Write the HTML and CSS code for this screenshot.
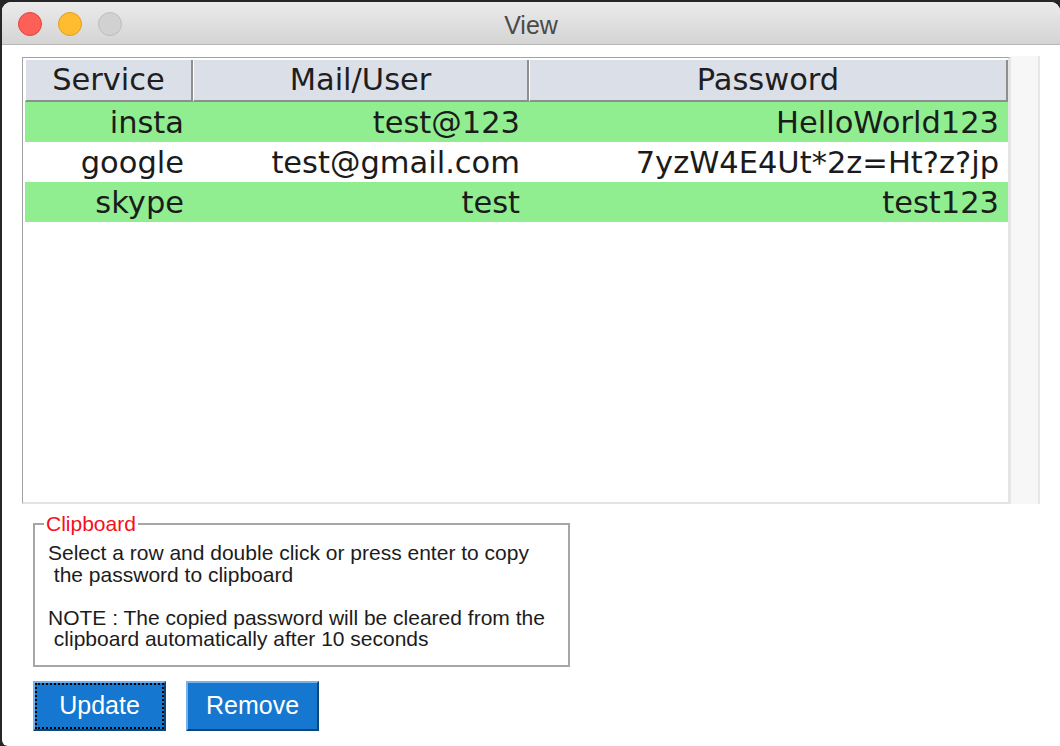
FILE: index.html
```html
<!DOCTYPE html>
<html>
<head>
<meta charset="utf-8">
<title>View</title>
<link rel="stylesheet" href="styles.css">
</head>
<body>
<div class="window">
  <div class="titlebar">
    <div class="lights">
      <span class="light red"></span>
      <span class="light yellow"></span>
      <span class="light gray"></span>
    </div>
    <div class="title">View</div>
    <div></div>
  </div>
  <div class="content">
    <div class="table-area">
      <div class="pane">
        <div class="row head">
          <div class="th">Service</div>
          <div class="th">Mail/User</div>
          <div class="th">Password</div>
        </div>
        <div class="row hl">
          <div class="td">insta</div>
          <div class="td">test@123</div>
          <div class="td">HelloWorld123</div>
        </div>
        <div class="row">
          <div class="td">google</div>
          <div class="td">test@gmail.com</div>
          <div class="td">7yzW4E4Ut*2z=Ht?z?jp</div>
        </div>
        <div class="row hl">
          <div class="td">skype</div>
          <div class="td">test</div>
          <div class="td">test123</div>
        </div>
      </div>
      <div class="scrollbar"></div>
    </div>
    <fieldset class="clip">
      <legend>Clipboard</legend>
      <p class="note">Select a row and double click or press enter to copy
 the password to clipboard

NOTE : The copied password will be cleared from the
 clipboard automatically after 10 seconds</p>
    </fieldset>
    <div class="btns">
      <button class="btn focus">Update</button>
      <button class="btn">Remove</button>
    </div>
  </div>
</div>
</body>
</html>
```

FILE: styles.css
```css
html, body {
  margin: 0;
  padding: 0;
}
body {
  width: 1060px;
  height: 746px;
  overflow: hidden;
  background: #262626;
  font-family: "Liberation Sans", Arial, sans-serif;
}
.window {
  margin: 2px 0 0 2px;
  width: 1058px;
  height: 744px;
  background: #ffffff;
  border-radius: 9px 9px 0 6px;
  overflow: hidden;
  display: flex;
  flex-direction: column;
}
.titlebar {
  box-sizing: border-box;
  height: 43px;
  padding-top: 2px;
  border-bottom: 1px solid #b8b8b8;
  background: linear-gradient(#ebebeb, #d4d4d4);
  display: grid;
  grid-template-columns: 1fr auto 1fr;
  align-items: center;
}
.lights {
  display: flex;
  gap: 16px;
  padding-left: 16px;
}
.light {
  width: 24px;
  height: 24px;
  box-sizing: border-box;
  border-radius: 50%;
  border: 1px solid;
}
.red { background: #fe5f57; border-color: #e1453f; }
.yellow { background: #febc2e; border-color: #dfa024; }
.gray { background: #d1d1d1; border-color: #bdbdbd; }
.title {
  font-family: "Liberation Sans", Arial, sans-serif;
  font-size: 25px;
  line-height: 28px;
  padding-top: 1px;
  color: #4a4a4a;
}
.content {
  flex: 1;
  padding: 12px 0 0 20px;
  display: flex;
  flex-direction: column;
  align-items: flex-start;
}
.table-area {
  display: flex;
}
.pane {
  box-sizing: border-box;
  width: 989px;
  height: 447px;
  border-top: 1px solid #a3a3a3;
  border-left: 1px solid #a3a3a3;
  border-right: 3px solid #e5e5e5;
  border-bottom: 2px solid #e3e3e3;
  padding: 2px 0 0 2px;
  background: #ffffff;
}
.scrollbar {
  box-sizing: border-box;
  width: 29px;
  height: 448px;
  margin-top: -1px;
  background: #f7f7f7;
  border-right: 2px solid #e7e7e7;
}
.row {
  display: grid;
  grid-template-columns: 168px 336px 479px;
  height: 40px;
  font-family: "DejaVu Sans", sans-serif;
  font-size: 30.5px;
  color: #1b1b1b;
}
.row.head {
  height: 42px;
}
.row.hl {
  background: #90ee90;
}
.th {
  box-sizing: border-box;
  background: #dbdfe7;
  border-left: 1px solid #ffffff;
  border-right: 2px solid #8e8e8e;
  border-bottom: 2px solid #8e8e8e;
  text-align: center;
  line-height: 40px;
  color: #1e1e1e;
}
.td {
  box-sizing: border-box;
  text-align: right;
  padding: 2px 9px 0 0;
  line-height: 38px;
  white-space: nowrap;
}
.clip {
  margin: 9px 0 0 11px;
  width: 537px;
  box-sizing: border-box;
  border: 2px solid #a6a6a6;
  padding: 8px 13px 15px 13px;
  min-width: 0;
}
.clip legend {
  color: #f5101a;
  font-size: 21px;
  line-height: 21px;
  padding: 0 2px;
  margin-left: -4px;
}
.note {
  margin: 0;
  white-space: pre;
  font-size: 21px;
  line-height: 21.5px;
  color: #1c1c1c;
}
.btns {
  display: flex;
  gap: 20px;
  margin: 14px 0 0 11px;
}
.btn {
  box-sizing: border-box;
  width: 133px;
  height: 50px;
  padding: 0;
  background: #1677d0;
  color: #ffffff;
  font-family: "Liberation Sans", Arial, sans-serif;
  font-size: 25px;
  border: 2px solid;
  border-color: #74b3ee #0b4678 #0b4678 #74b3ee;
  border-radius: 0;
}
.btn.focus {
  outline: 2px dotted #000000;
  outline-offset: -4px;
}
```
